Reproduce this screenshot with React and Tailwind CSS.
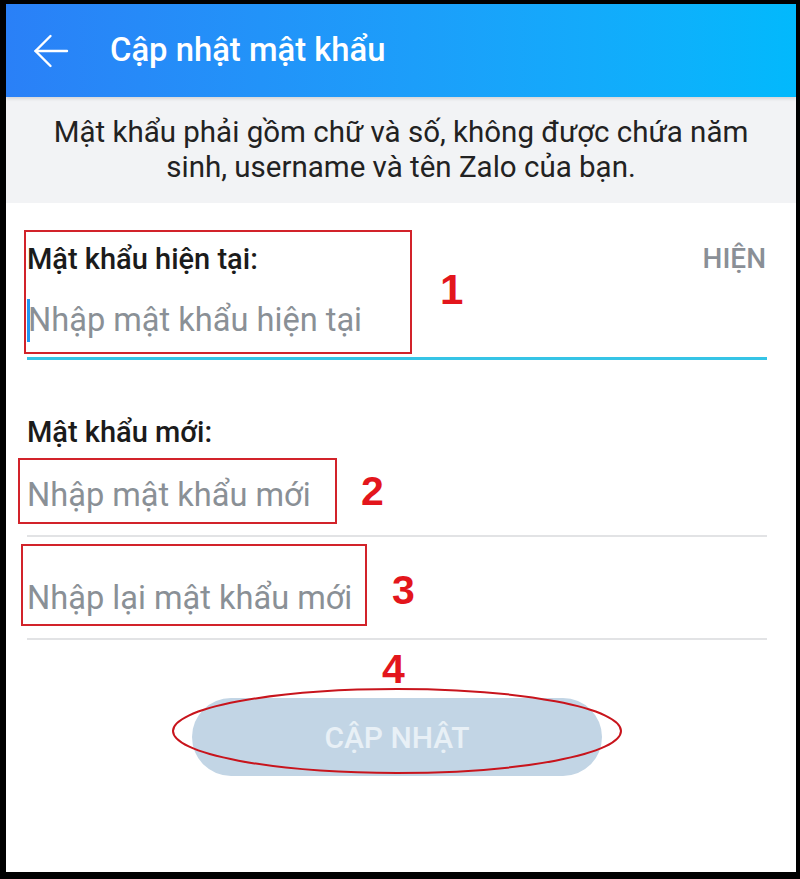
export default function App() {
  const font = { fontFamily: 'Roboto, "Noto Sans", sans-serif' };
  const digit = { fontFamily: '"Liberation Sans", Arial, sans-serif' };
  return (
    <div className="relative w-[800px] h-[879px] bg-black pt-[4px] pl-[6px] pr-[4px] pb-[7px]" style={font}>
      <div className="w-full h-full bg-white flex flex-col">
        <div className="h-[93px] bg-linear-to-r from-[#2a80f7] to-[#02b9fc] flex items-center shadow-[0_2px_3px_rgba(0,0,0,0.12)] relative z-10">
          <svg className="ml-[27px]" width="36" height="34" viewBox="0 0 36 34" fill="none" stroke="white" strokeWidth="2.4" strokeLinecap="round" strokeLinejoin="round">
            <path d="M34 17H2.5" />
            <path d="M17.5 2L2.5 17L17.5 32" />
          </svg>
          <span className="ml-[41px] text-white text-[32.8px] font-medium leading-none">Cập nhật mật khẩu</span>
        </div>
        <div className="h-[106px] bg-[#f2f3f5] flex items-center justify-center">
          <p className="text-center text-[29.5px] leading-[35px] text-[#222]">
            Mật khẩu phải gồm chữ và số, không được chứa năm<br />sinh, username và tên Zalo của bạn.
          </p>
        </div>
        <div className="flex flex-col pl-[21px] pr-[29px]">
          <div className="pt-[39px] flex justify-between items-center h-[72px]">
            <span className="text-[29px] font-medium text-[#1b1b1b] leading-[32px] self-end">Mật khẩu hiện tại:</span>
            <span className="text-[28px] font-medium text-[#8a8f96] leading-[32px] self-end pr-[1px]">HIỆN</span>
          </div>
          <div className="mt-[23px] h-[44px] flex items-center">
            <span className="inline-block w-[3px] h-[43px] bg-[#2196f3] mr-[-2px]"></span>
            <span className="text-[32.6px] text-[#8a9096] leading-[44px]">Nhập mật khẩu hiện tại</span>
          </div>
          <div className="mt-[15px] h-[3px] bg-[#35c4e6]"></div>
          <div className="mt-[56px] h-[32px] flex items-center">
            <span className="text-[29px] font-medium text-[#1b1b1b] leading-[32px]">Mật khẩu mới:</span>
          </div>
          <div className="pt-[25px] pb-[18px] border-b-2 border-[#e2e3e5]">
            <div className="h-[44px] flex items-center text-[32.6px] text-[#8a9096]">Nhập mật khẩu mới</div>
          </div>
          <div className="pt-[39px] pb-[18px] border-b-2 border-[#e2e3e5]">
            <div className="h-[44px] flex items-center text-[32.6px] text-[#8a9096]">Nhập lại mật khẩu mới</div>
          </div>
          <div className="mt-[58px] flex justify-center">
            <div className="w-[410px] h-[78px] rounded-full bg-[#c2d5e5] flex items-center justify-center text-[30px] font-medium text-[#e8f0f6]">
              CẬP NHẬT
            </div>
          </div>
        </div>
      </div>

      <div className="absolute left-[24px] top-[230px] w-[388px] h-[124px] border-2 border-[#d2232a]"></div>
      <div className="absolute left-[18px] top-[458px] w-[319px] h-[66px] border-2 border-[#d2232a]"></div>
      <div className="absolute left-[21px] top-[544px] w-[346px] h-[82px] border-2 border-[#d2232a]"></div>
      <span className="absolute left-[440px] top-[268px] text-[42px] leading-[44px] font-bold text-[#e3161c]" style={digit}>1</span>
      <span className="absolute left-[361px] top-[469px] text-[41px] leading-[44px] font-bold text-[#e3161c]" style={digit}>2</span>
      <span className="absolute left-[392px] top-[568px] text-[41px] leading-[44px] font-bold text-[#e3161c]" style={digit}>3</span>
      <span className="absolute left-[382px] top-[647px] text-[41px] leading-[44px] font-bold text-[#e3161c]" style={digit}>4</span>
      <svg className="absolute left-[170px] top-[685px]" width="454" height="94" viewBox="0 0 454 94" fill="none">
        <ellipse cx="227" cy="46" rx="224" ry="42" stroke="#c8141c" strokeWidth="2" />
      </svg>
    </div>
  );
}
